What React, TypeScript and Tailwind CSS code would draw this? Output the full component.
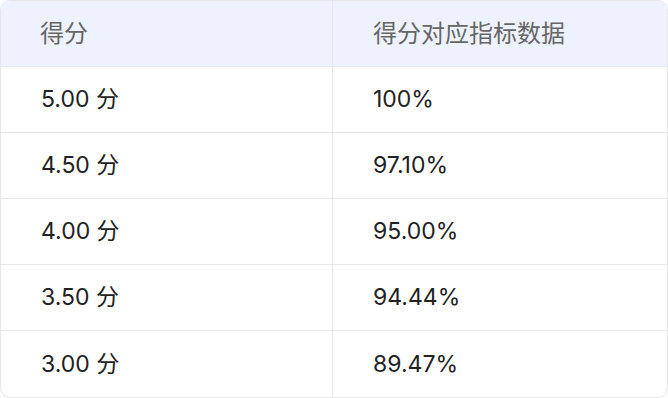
const rows = [
  { score: '5.00 分', value: '100%' },
  { score: '4.50 分', value: '97.10%' },
  { score: '4.00 分', value: '95.00%' },
  { score: '3.50 分', value: '94.44%' },
  { score: '3.00 分', value: '89.47%' },
];

const font = "font-['Inter','Noto_Sans_CJK_SC',sans-serif]";

export default function App() {
  return (
    <div className={`w-[668px] h-[398px] bg-white ${font}`}>
      <div className="h-full border border-[#e5e7eb] rounded-[10px] overflow-hidden flex flex-col">
        <div className="flex h-[66px] bg-[#eef2fe] border-b border-[#e5e7eb] text-[24px] text-[#666666]">
          <div className="w-[332px] border-r border-[#e5e7eb] flex items-center pl-[39px]">得分</div>
          <div className="flex-1 flex items-center pl-[40px]">得分对应指标数据</div>
        </div>
        {rows.map((r, i) => (
          <div
            key={r.score}
            className={`flex h-[66px] text-[23px] text-[#222222] ${i < rows.length - 1 ? 'border-b border-[#e5e7eb]' : 'flex-1'}`}
          >
            <div className="w-[332px] border-r border-[#e5e7eb] flex items-center pl-[40px]">{r.score}</div>
            <div className="flex-1 flex items-center pl-[40px]">{r.value}</div>
          </div>
        ))}
      </div>
    </div>
  );
}
